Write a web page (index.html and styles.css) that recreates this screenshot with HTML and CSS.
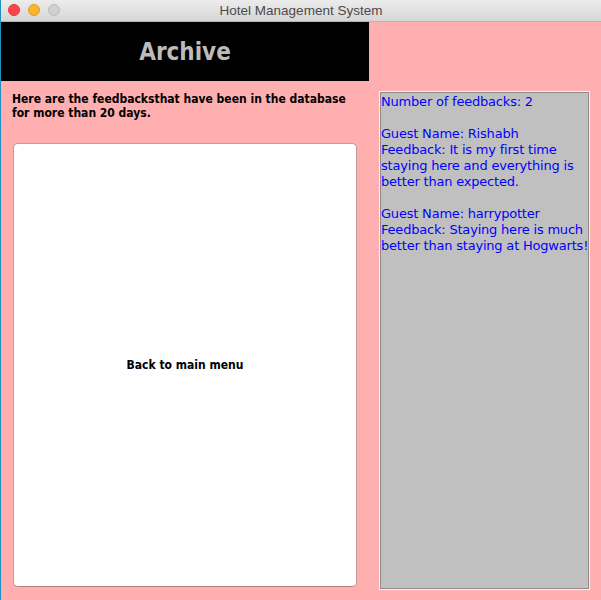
FILE: index.html
```html
<!DOCTYPE html>
<html>
<head>
<meta charset="utf-8">
<link rel="stylesheet" href="styles.css">
</head>
<body>
<div class="window">
  <div class="titlebar">
    <div class="lights">
      <span class="light red"></span>
      <span class="light yellow"></span>
      <span class="light grey"></span>
    </div>
    <div class="title">Hotel Management System</div>
  </div>
  <div class="content">
    <div class="left">
      <div class="header">Archive</div>
      <p class="desc">Here are the feedbacksthat have been in the database for more than 20 days.</p>
      <button class="back">Back to main menu</button>
    </div>
    <div class="right">
      <div class="textarea">Number of feedbacks: 2

Guest Name: Rishabh
Feedback: It is my first time staying here and everything is better than expected.

Guest Name: harrypotter
Feedback: Staying here is much better than staying at Hogwarts!</div>
    </div>
  </div>
</div>
</body>
</html>
```
FILE: styles.css
```css
html, body {
  margin: 0;
  padding: 0;
  width: 601px;
  height: 600px;
  overflow: hidden;
  background: #ffafaf;
}
.window {
  width: 601px;
  height: 600px;
  display: flex;
  flex-direction: column;
  border-left: 1px solid #1f8fc4;
  box-sizing: border-box;
  font-family: "DejaVu Sans", sans-serif;
}
.titlebar {
  height: 21px;
  border-bottom: 1px solid #b4b4b4;
  background: linear-gradient(#ececec, #d6d6d6);
  position: relative;
  display: flex;
  align-items: center;
  justify-content: center;
}
.lights {
  position: absolute;
  left: 7px;
  top: 4px;
  display: flex;
  gap: 8px;
}
.light {
  width: 12px;
  height: 12px;
  border-radius: 50%;
  box-sizing: border-box;
}
.red { background: #fc4549; border: 1px solid #e0383c; }
.yellow { background: #fdb32a; border: 1px solid #dea023; }
.grey { background: #d0d0d0; border: 1px solid #bdbdbd; }
.title {
  font-family: "Liberation Sans", "Helvetica", sans-serif;
  font-size: 13.5px;
  color: #4b4b4b;
}
.content {
  flex: 1;
  display: flex;
  background: #ffafaf;
}
.left {
  width: 368px;
  display: flex;
  flex-direction: column;
}
.header {
  height: 59px;
  background: #000;
  color: #bcbcbc;
  font-family: "DejaVu Sans Condensed", "DejaVu Sans", sans-serif;
  font-weight: bold;
  font-size: 24px;
  display: flex;
  align-items: center;
  justify-content: center;
  padding-top: 1px;
  box-sizing: border-box;
}
.desc {
  margin: 11px 0 0 11px;
  width: 345px;
  font-family: "DejaVu Sans Condensed", "DejaVu Sans", sans-serif;
  font-weight: bold;
  font-size: 12px;
  line-height: 14px;
  color: #000;
}
.back {
  margin: 23px 0 0 12px;
  width: 344px;
  height: 444px;
  background: #fff;
  border: 1px solid #c79a9a;
  border-bottom-color: #b07f7f;
  border-radius: 5px;
  font-family: "DejaVu Sans Condensed", "DejaVu Sans", sans-serif;
  font-weight: bold;
  font-size: 12px;
  color: #000;
  padding: 0;
}
.right {
  padding: 69px 0 0 10px;
}
.textarea {
  width: 211px;
  height: 499px;
  box-sizing: border-box;
  background: #c0c0c0;
  border: 1px solid #f2f2f2;
  box-shadow: inset 0 0 0 1px #8c8c8c;
  white-space: pre-wrap;
  color: #0000ff;
  font-size: 13px;
  letter-spacing: -0.2px;
  line-height: 16px;
  padding: 2px 0 0 1px;
}
```
